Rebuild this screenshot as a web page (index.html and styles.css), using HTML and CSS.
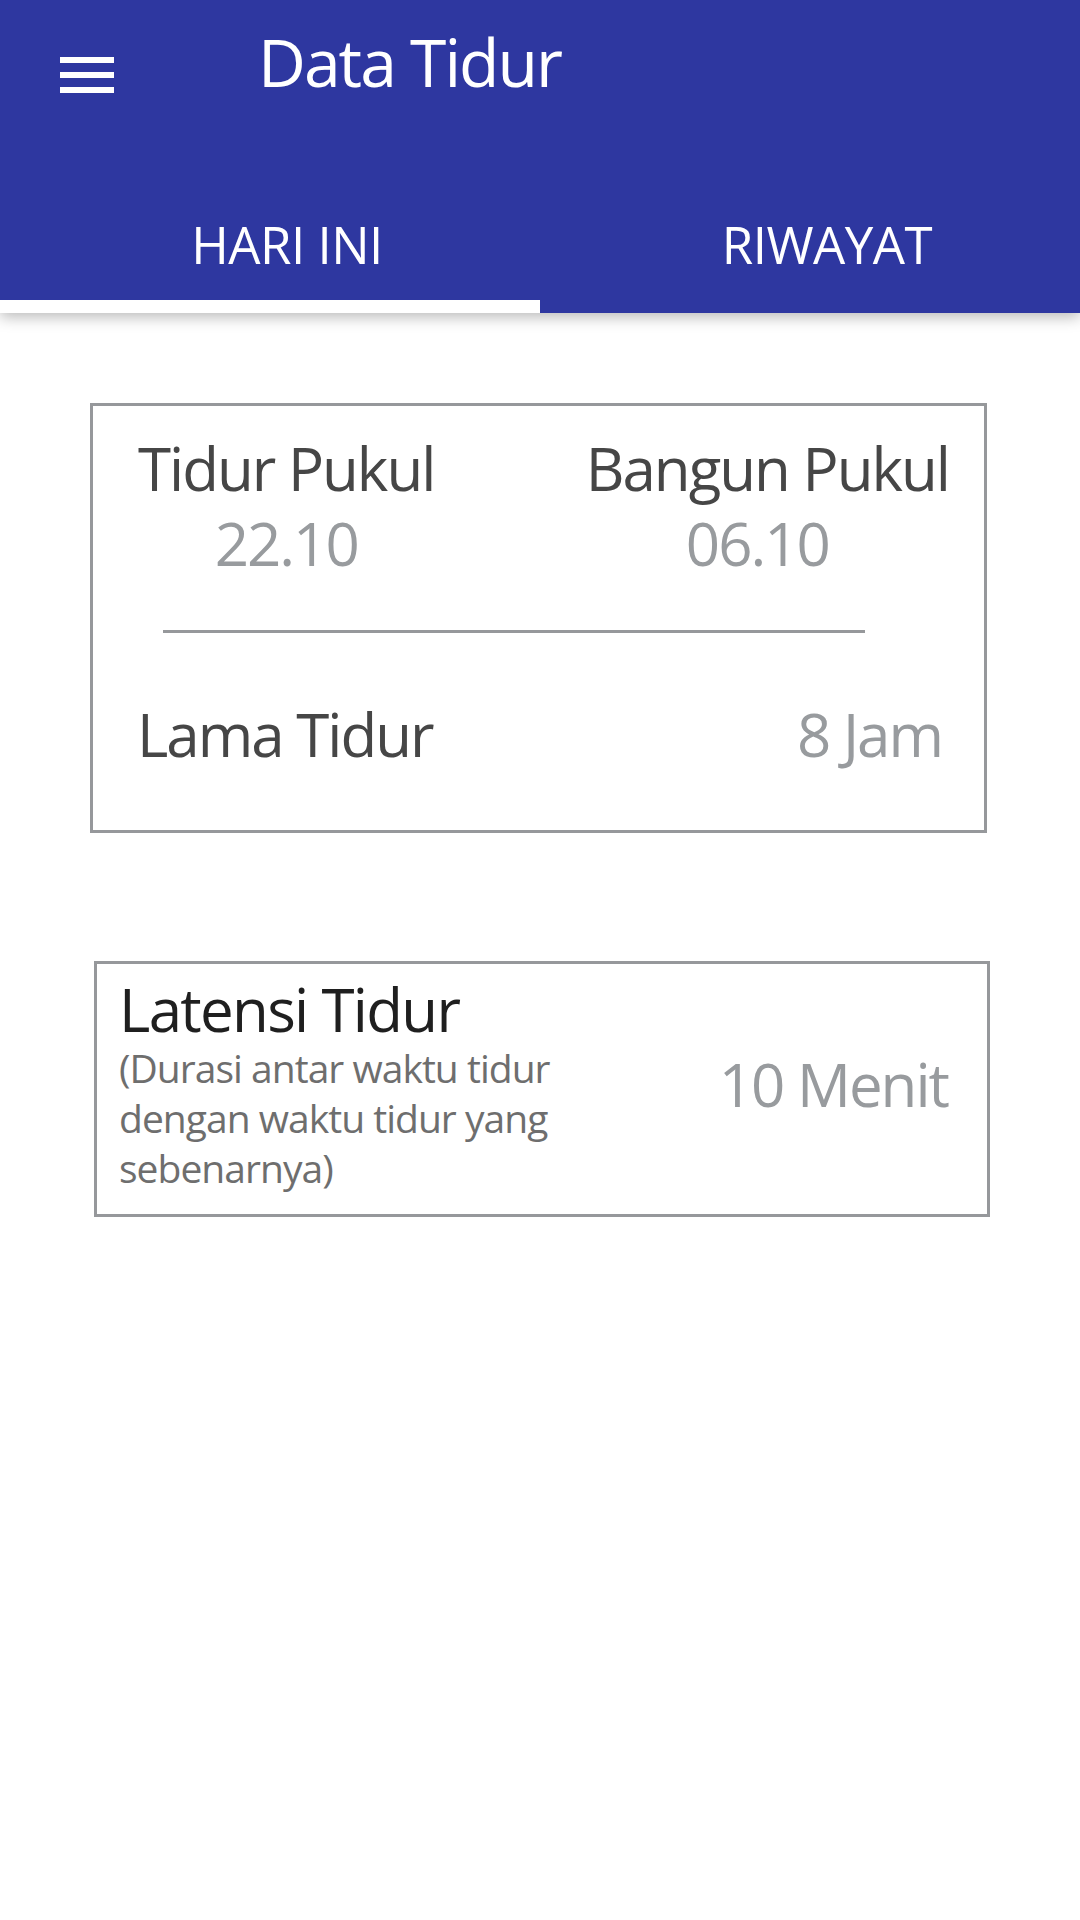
FILE: index.html
```html
<!DOCTYPE html>
<html lang="id">
<head>
<meta charset="utf-8">
<title>Data Tidur</title>
<link rel="stylesheet" href="styles.css">
</head>
<body>
<header class="appbar">
  <div class="toolbar">
    <svg class="menu-icon" viewBox="0 0 72 72" width="72" height="72" aria-hidden="true">
      <rect x="9" y="18" width="54" height="6"/>
      <rect x="9" y="33" width="54" height="6"/>
      <rect x="9" y="48" width="54" height="6"/>
    </svg>
    <h1 class="title">Data Tidur</h1>
  </div>
  <nav class="tabs">
    <div class="tab active"><span class="tab-label">HARI INI</span><span class="tab-indicator"></span></div>
    <div class="tab"><span class="tab-label">RIWAYAT</span><span class="tab-indicator"></span></div>
  </nav>
</header>
<main class="content">
  <section class="card card-sleep">
    <div class="times">
      <div class="time-col">
        <span class="label">Tidur Pukul</span>
        <span class="value">22.10</span>
      </div>
      <div class="time-col col-wake">
        <span class="label">Bangun Pukul</span>
        <span class="value">06.10</span>
      </div>
    </div>
    <div class="divider"></div>
    <div class="duration">
      <span class="label">Lama Tidur</span>
      <span class="value">8 Jam</span>
    </div>
  </section>
  <section class="card card-latency">
    <div class="latency-text">
      <div class="latency-title">Latensi Tidur</div>
      <div class="latency-desc">(Durasi antar waktu tidur dengan waktu tidur yang sebenarnya)</div>
    </div>
    <div class="value latency-value">10 Menit</div>
  </section>
</main>
</body>
</html>
```

FILE: styles.css
```css
* {
  box-sizing: border-box;
}

html, body {
  margin: 0;
  padding: 0;
  background: #ffffff;
}

body {
  width: 1080px;
  min-height: 1920px;
  font-family: "Open Sans", "Noto Sans", sans-serif;
  font-weight: 400;
}

.appbar {
  background: #2e37a0;
  height: 313px;
  box-shadow: 0 4px 14px rgba(0, 0, 0, 0.28);
  position: relative;
  z-index: 2;
  display: flex;
  flex-direction: column;
}

.toolbar {
  height: 168px;
  display: flex;
  align-items: flex-start;
  padding-left: 51px;
}

.menu-icon {
  margin-top: 39px;
  fill: #ffffff;
  flex: none;
}

.title {
  margin: 16px 0 0 135px;
  font-size: 66px;
  line-height: 90px;
  font-weight: 400;
  color: #ffffff;
  letter-spacing: -0.03em;
}

.tabs {
  flex: 1;
  display: flex;
}

.tab {
  flex: 1;
  display: flex;
  flex-direction: column;
  align-items: center;
  padding-top: 41px;
  padding-left: 34px;
}

.tab-label {
  font-size: 51px;
  line-height: 70px;
  color: #ffffff;
  letter-spacing: -0.01em;
}

.tab-indicator {
  margin-top: auto;
  align-self: stretch;
  margin-left: -34px;
  height: 13px;
}

.tab.active .tab-indicator {
  background: #ffffff;
}

.content {
  padding-top: 90px;
  display: flex;
  flex-direction: column;
}

.card {
  border: 3px solid #96989b;
  background: #ffffff;
}

.label,
.value,
.latency-title {
  font-size: 60px;
  line-height: 75px;
  letter-spacing: -0.033em;
}

.label {
  color: #464646;
}

.value {
  color: #989b9e;
}

.card-sleep {
  margin-left: 90px;
  width: 897px;
  padding: 25px 0 58px 0;
  display: flex;
  flex-direction: column;
}

.times {
  display: flex;
  justify-content: space-between;
  padding: 0 35px 0 45px;
}

.time-col {
  display: flex;
  flex-direction: column;
  align-items: center;
}

.col-wake .value {
  margin-right: 20px;
}

.divider {
  margin: 49px 0 0 70px;
  width: 702px;
  height: 3px;
  background: #96989b;
}

.duration {
  margin-top: 64px;
  display: flex;
  justify-content: space-between;
  padding: 0 42px 0 44px;
}

.card-latency {
  margin-top: 128px;
  margin-left: 94px;
  width: 896px;
  padding: 12px 39px 21px 22px;
  display: flex;
  justify-content: space-between;
  align-items: center;
}

.latency-text {
  width: 460px;
}

.latency-title {
  color: #1f1f1f;
  line-height: 66px;
  letter-spacing: -0.028em;
}

.latency-desc {
  margin-top: 1px;
  font-size: 39px;
  line-height: 50px;
  color: #6e6e6e;
  letter-spacing: -0.025em;
}

.latency-value {
  align-self: center;
}
```
